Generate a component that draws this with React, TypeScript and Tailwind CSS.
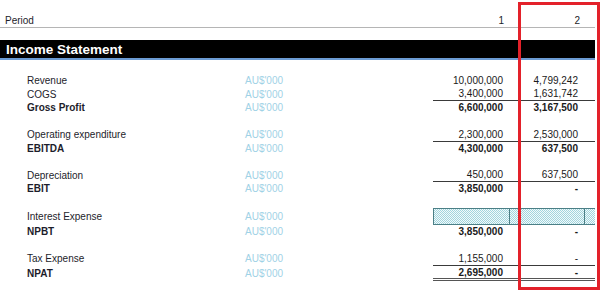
import React from 'react';

type Row = {
  label?: string;
  bold?: boolean;
  v1?: string;
  v2?: string;
  h: string;
  line?: 'single' | 'double';
  hatch?: boolean;
};

const rows: Row[] = [
  { label: 'Revenue', v1: '10,000,000', v2: '4,799,242', h: 'h-[14px]' },
  { label: 'COGS', v1: '3,400,000', v2: '1,631,742', h: 'h-[14px]', line: 'single' },
  { label: 'Gross Profit', bold: true, v1: '6,600,000', v2: '3,167,500', h: 'h-[13px]' },
  { h: 'h-[13px]' },
  { label: 'Operating expenditure', v1: '2,300,000', v2: '2,530,000', h: 'h-[15px]', line: 'single' },
  { label: 'EBITDA', bold: true, v1: '4,300,000', v2: '637,500', h: 'h-[13px]' },
  { h: 'h-[13px]' },
  { label: 'Depreciation', v1: '450,000', v2: '637,500', h: 'h-[14px]', line: 'single' },
  { label: 'EBIT', bold: true, v1: '3,850,000', v2: '-', h: 'h-[13px]' },
  { h: 'h-[13px]' },
  { label: 'Interest Expense', h: 'h-[17px]', hatch: true },
  { label: 'NPBT', bold: true, v1: '3,850,000', v2: '-', h: 'h-[13px]' },
  { h: 'h-[13px]' },
  { label: 'Tax Expense', v1: '1,155,000', v2: '-', h: 'h-[15px]', line: 'single' },
  { label: 'NPAT', bold: true, v1: '2,695,000', v2: '-', h: 'h-[15px]', line: 'double' },
];

const hatchCls =
  'bg-[repeating-conic-gradient(#a2d4dd_0_25%,#f2fafb_0_50%)] bg-[length:2px_2px] border-t border-b border-l border-[#4b7f86]';

const StatementRow: React.FC<{ row: Row }> = ({ row }) => {
  const lineCls =
    row.line === 'single'
      ? 'border-b border-[#3a3a3a]'
      : row.line === 'double'
      ? 'border-b-[3px] border-double border-[#555]'
      : '';
  const weight = row.bold ? 'font-bold' : '';

  return (
    <div className={`flex ${row.h}`}>
      <div className="w-[27px]" />
      <div className={`w-[218px] pt-[1px] flex items-center text-[#1d1d2b] ${weight}`}>{row.label}</div>
      <div className="w-[188px] pt-[1px] flex items-center text-[#9fd2e6]">{row.label ? "AU$'000" : ''}</div>
      {row.hatch ? (
        <div className="flex">
          <div className={`w-[76px] ${hatchCls}`} />
          <div className={`w-[75px] ${hatchCls}`} />
          <div className={`w-[11px] ${hatchCls}`} />
        </div>
      ) : (
        <div className={`flex ${lineCls}`}>
          <div className={`w-[76px] pr-[6px] pt-[1px] flex items-center justify-end text-[#1a1a1a] ${weight}`}>{row.v1}</div>
          <div className={`w-[75px] pr-[6px] pt-[1px] flex items-center justify-end text-[#1a1a1a] ${weight}`}>{row.v2}</div>
          <div className="w-[11px]" />
        </div>
      )}
    </div>
  );
};

export default function App() {
  return (
    <div className="relative w-[601px] h-[291px] bg-white overflow-hidden font-['Liberation_Sans',Arial,sans-serif] text-[10px] leading-none">
      <div className="w-[595px] pt-[14px]">
        {/* header */}
        <div className="flex h-[14px] border-b border-[#b5b5b5] text-[#1d1d2b]">
          <div className="w-[433px] pl-[5px] flex items-center">Period</div>
          <div className="w-[76px] pr-[5px] flex items-center justify-end">1</div>
          <div className="w-[75px] pr-[4px] flex items-center justify-end">2</div>
        </div>

        <div className="h-[12px]" />

        <div className="h-[20px] bg-black border-b-2 border-[#6b9bd3] flex items-center pl-[6px] pt-[1px]">
          <span className="text-white font-bold text-[13.5px]">Income Statement</span>
        </div>

        <div className="h-[13px]" />

        {rows.map((r, i) => (
          <StatementRow key={i} row={r} />
        ))}
      </div>

      {/* highlight box */}
      <div className="absolute left-[518px] top-[2px] w-[82px] h-[288px] border-[3px] border-[#e3212a]" />
    </div>
  );
}
